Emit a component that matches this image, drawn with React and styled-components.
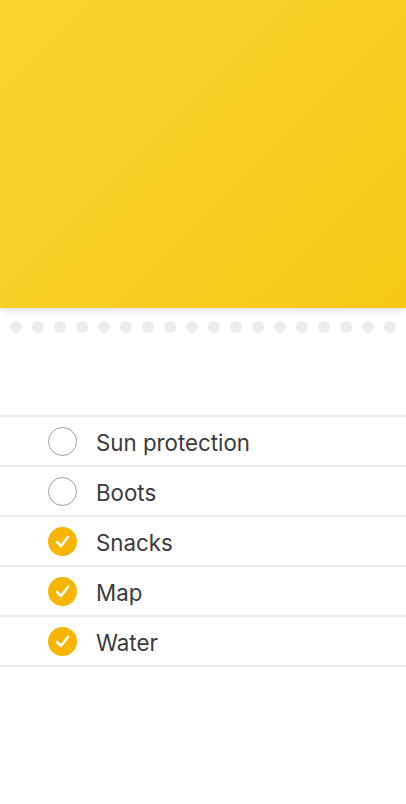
import React from "react";
import styled, { createGlobalStyle } from "styled-components";

const Global = createGlobalStyle`
  html, body { margin: 0; padding: 0; background: #ffffff; }
  body { font-family: Inter, "Noto Sans", sans-serif; -webkit-font-smoothing: antialiased; }
`;

const Page = styled.div`
  width: 406px;
  min-height: 804px;
  background: #fff;
  overflow: hidden;
`;

const Header = styled.div`
  height: 308px;
  background: linear-gradient(135deg, #fad430 0%, #f6c918 100%);
  box-shadow: 0 2px 7px rgba(0, 0, 0, 0.14);
  position: relative;
  z-index: 1;
`;

const Dots = styled.div`
  display: flex;
  gap: 10px;
  padding: 13px 0 0 10px;
`;

const Dot = styled.span`
  width: 12px;
  height: 12px;
  border-radius: 50%;
  background: #ececec;
  flex: none;
`;

const List = styled.ul`
  list-style: none;
  margin: 82px 0 0;
  padding: 0;
  border-bottom: 2px solid #e9e9e9;
`;

const Row = styled.li`
  display: flex;
  align-items: center;
  height: 48px;
  border-top: 2px solid #e9e9e9;
  padding-left: 48px;
`;

const Circle = styled.span`
  width: 29px;
  height: 29px;
  box-sizing: border-box;
  border-radius: 50%;
  flex: none;
  display: flex;
  align-items: center;
  justify-content: center;
  margin-top: 1px;
  border: ${(p) => (p.$checked ? "none" : "1px solid #9e9e9e")};
  background: ${(p) => (p.$checked ? "#f7b500" : "transparent")};
`;

const Label = styled.span`
  margin-left: 19px;
  padding-top: 3px;
  font-size: 22.3px;
  color: #3b3b3d;
`;

const items = [
  { label: "Sun protection", checked: false },
  { label: "Boots", checked: false },
  { label: "Snacks", checked: true },
  { label: "Map", checked: true },
  { label: "Water", checked: true },
];

export default function App() {
  return (
    <Page>
      <Global />
      <Header />
      <Dots>
        {Array.from({ length: 18 }).map((_, i) => (
          <Dot key={i} />
        ))}
      </Dots>
      <List>
        {items.map((it) => (
          <Row key={it.label}>
            <Circle $checked={it.checked}>
              {it.checked && (
                <svg width="29" height="29" viewBox="0 0 29 29">
                  <path
                    d="M9 15 L13 19 L20 10"
                    fill="none"
                    stroke="#fff"
                    strokeWidth="2.6"
                    strokeLinecap="round"
                    strokeLinejoin="round"
                  />
                </svg>
              )}
            </Circle>
            <Label>{it.label}</Label>
          </Row>
        ))}
      </List>
    </Page>
  );
}
